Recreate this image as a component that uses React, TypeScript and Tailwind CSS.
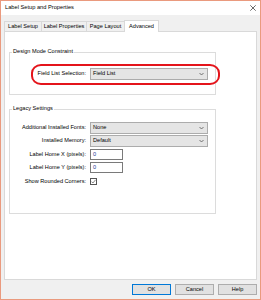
const tabs = [
  { name: 'Label Setup', w: 'w-[38px]' },
  { name: 'Label Properties', w: 'w-[46px]' },
  { name: 'Page Layout', w: 'w-[39px]' },
]

const Chevron = () => (
  <svg width="5" height="4" viewBox="0 0 5 4" className="mr-[3px]">
    <polyline points="0.5,1 2.5,3 4.5,1" fill="none" stroke="#555" strokeWidth="0.8" />
  </svg>
)

const Combo = ({ value }: { value: string }) => (
  <div className="w-[118px] h-full bg-[#e5e5e5] border border-[#acacac] flex items-center justify-between pl-[2px]">
    <span>{value}</span>
    <Chevron />
  </div>
)

const TextBox = ({ value }: { value: string }) => (
  <div className="w-[33px] h-full bg-white border border-[#7a7a7a] flex items-center pl-[2px] text-[#1f3a93]">
    {value}
  </div>
)

const Row = ({ label, className, children }: { label: string; className: string; children: React.ReactNode }) => (
  <div className={`flex items-center gap-[4px] ${className}`}>
    <div className="w-[76px] text-right">{label}</div>
    {children}
  </div>
)

const App = () => {
  return (
    <div className="w-[261px] h-[300px] border border-[#ea9a7e] bg-[#f0f0f0] flex flex-col font-['Liberation_Sans',Arial,sans-serif] text-[5.6px] leading-none text-black">
      {/* title bar */}
      <div className="h-[14px] bg-white flex items-center justify-between pl-[4px] pr-[4px]">
        <span className="text-[5.7px]">Label Setup and Properties</span>
        <svg width="6" height="6" viewBox="0 0 6 6">
          <path d="M0.3 0.3 L5.7 5.7 M5.7 0.3 L0.3 5.7" stroke="#444" strokeWidth="0.8" />
        </svg>
      </div>

      <div className="flex-1 flex flex-col px-[3px] pt-[5px]">
        {/* tabs */}
        <div className="h-[11px] flex items-end">
          {tabs.map((t, i) => (
            <div
              key={t.name}
              className={`${t.w} h-[10px] ${i > 0 ? '-ml-px' : ''} border border-b-0 border-[#d9d9d9] bg-[#f0f0f0] flex items-center justify-center`}
            >
              {t.name}
            </div>
          ))}
          <div className="w-[35px] h-[12px] -ml-px -mb-px relative bg-white border border-b-0 border-[#d9d9d9] flex items-center justify-center">
            Advanced
          </div>
        </div>

        {/* tab page */}
        <div className="flex-1 bg-white border border-[#d9d9d9] flex flex-col pl-[4px]">
          {/* Design Mode Constraint */}
          <div className="relative mt-[20px] w-[207px] h-[43px] border border-[#dcdcdc]">
            <span className="absolute left-[2px] -top-[5px] bg-white px-[1px] leading-[7px]">Design Mode Constraint</span>
            <Row label="Field List Selection:" className="mt-[15px] h-[12px]">
              <Combo value="Field List" />
            </Row>
            <div className="absolute left-[21px] top-[11px] w-[189px] h-[21px] border-2 border-[#e4141b] rounded-[10px/9px]" />
          </div>

          {/* Legacy Settings */}
          <div className="relative mt-[14px] w-[207px] h-[105px] border border-[#dcdcdc]">
            <span className="absolute left-[2px] -top-[5px] bg-white px-[1px] leading-[7px]">Legacy Settings</span>
            <Row label="Additional Installed Fonts:" className="mt-[12px] h-[12px]">
              <Combo value="None" />
            </Row>
            <Row label="Installed Memory:" className="mt-[1px] h-[12px]">
              <Combo value="Default" />
            </Row>
            <Row label="Label Home X (pixels):" className="mt-[2px] h-[11px]">
              <TextBox value="0" />
            </Row>
            <Row label="Label Home Y (pixels):" className="mt-[2px] h-[11px]">
              <TextBox value="0" />
            </Row>
            <Row label="Show Rounded Corners:" className="mt-[5px] h-[7px]">
              <div className="w-[7px] h-[7px] border border-[#555] bg-white flex items-center justify-center">
                <svg width="5" height="5" viewBox="0 0 5 5">
                  <polyline points="0.5,2.6 1.9,4 4.6,0.8" fill="none" stroke="#555" strokeWidth="0.7" />
                </svg>
              </div>
            </Row>
          </div>
        </div>
      </div>

      {/* buttons */}
      <div className="h-[11px] mt-[4px] mb-[4px] flex justify-end gap-[4px] pr-[3px]">
        <button className="w-[39px] h-full bg-[#e1e1e1] border border-[#0078d7] flex items-center justify-center">OK</button>
        <button className="w-[39px] h-full bg-[#e1e1e1] border border-[#adadad] flex items-center justify-center">Cancel</button>
        <button className="w-[39px] h-full bg-[#e1e1e1] border border-[#adadad] flex items-center justify-center">Help</button>
      </div>
    </div>
  )
}

export default App
